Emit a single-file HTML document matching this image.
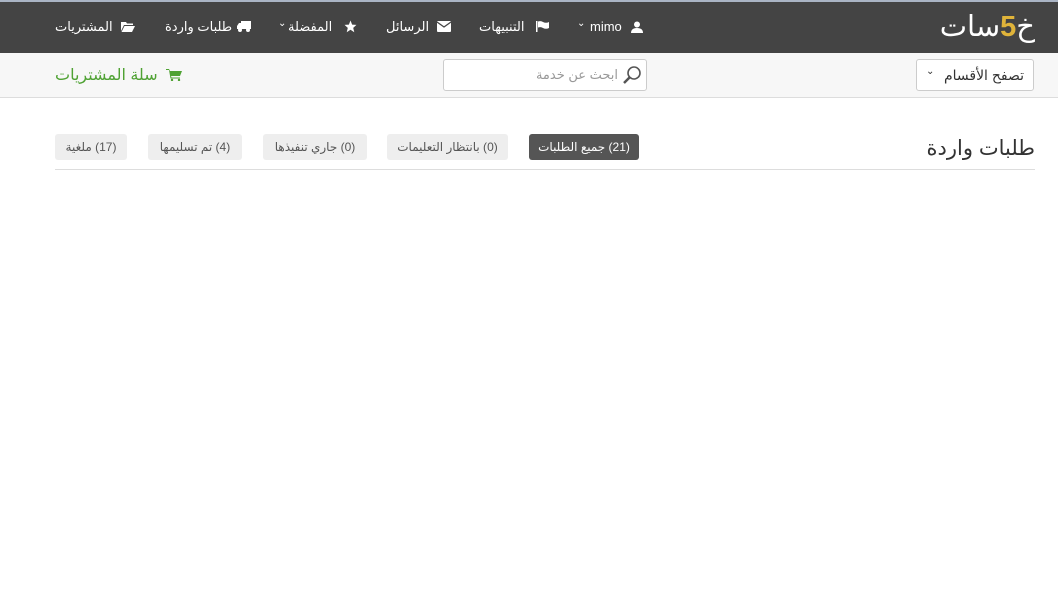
<!DOCTYPE html>
<html><head><meta charset="utf-8"><style>
*{margin:0;padding:0;box-sizing:border-box}
body{width:1058px;height:614px;background:#fff;position:relative;overflow:hidden;font-family:"Liberation Sans","DejaVu Sans",sans-serif;font-size:13px}
.a{position:absolute;white-space:nowrap}
#top{position:absolute;left:0;top:0;width:1058px;height:53px;background:#444;border-top:2px solid #aab4c4}
#sub{position:absolute;left:0;top:53px;width:1058px;height:45px;background:#f7f7f7;border-bottom:1px solid #ddd}
.n{color:#fff;font-size:13px;top:19px;direction:rtl}
.btn{position:absolute;top:134px;height:26px;border-radius:3px;background:#eee;color:#555;font-size:12px;line-height:26px;text-align:center;direction:rtl}
</style></head><body>
<div id="top"></div>
<div id="sub"></div>
<!-- logo -->
<div class="a" style="right:23px;top:7px;font-size:29px;color:#fff;direction:rtl;font-family:'DejaVu Sans',sans-serif;line-height:38px">خ<span style="color:#e0b43a;font-family:'Liberation Sans';font-weight:bold">5</span>سات</div>
<!-- nav -->
<svg class="a" style="left:631px;top:21px" width="12" height="12" viewBox="0 0 12 12"><circle cx="6" cy="3.5" r="3" fill="#fff"/><path d="M0 12 Q0 7 6 7 Q12 7 12 12Z" fill="#fff"/></svg>
<div class="a n" style="left:590px">mimo</div>
<div class="a n" style="left:577px;top:18px;font-size:10px">⌄</div>
<svg class="a" style="left:536px;top:21px" width="13" height="11" viewBox="0 0 13 11"><rect x="0" y="0" width="1.5" height="11" fill="#fff"/><path d="M2 0.5 Q5 -0.5 7 1 Q10 2.5 13 1 V7 Q10 8.5 7 7 Q5 5.5 2 6.5Z" fill="#fff"/></svg>
<div class="a n" style="left:479px">التنبيهات</div>
<svg class="a" style="left:437px;top:21px" width="14" height="11" viewBox="0 0 14 11"><rect x="0" y="0" width="14" height="11" rx="1" fill="#fff"/><path d="M0 1 L7 6 L14 1" stroke="#444" stroke-width="1.3" fill="none"/></svg>
<div class="a n" style="left:386px">الرسائل</div>
<svg class="a" style="left:344px;top:20px" width="13" height="13" viewBox="0 0 24 24"><path d="M12 1 L15 8.5 L23 9 L17 14.5 L19 22.5 L12 18 L5 22.5 L7 14.5 L1 9 L9 8.5Z" fill="#fff"/></svg>
<div class="a n" style="left:288px">المفضلة</div>
<div class="a n" style="left:278px;top:18px;font-size:10px">⌄</div>
<svg class="a" style="left:237px;top:21px" width="14" height="11" viewBox="0 0 14 11"><rect x="4" y="0" width="10" height="8" fill="#fff"/><path d="M0 5 L2 2 H4 V8 H0Z" fill="#fff"/><circle cx="3" cy="9" r="2" fill="#fff"/><circle cx="11" cy="9" r="2" fill="#fff"/></svg>
<div class="a n" style="left:165px">طلبات واردة</div>
<svg class="a" style="left:121px;top:21px" width="14" height="11" viewBox="0 0 14 11"><path d="M0 1 H5 L6 2.5 H12 V4 H3 L0 10Z" fill="#fff"/><path d="M3.5 5 H14 L11 11 H0.5Z" fill="#fff"/></svg>
<div class="a n" style="left:55px">المشتريات</div>
<!-- sub bar -->
<div class="a" style="left:916px;top:59px;width:118px;height:32px;border:1px solid #ccc;border-radius:3px;background:#fff"></div>
<div class="a" style="right:34px;top:67px;font-size:14px;color:#333;direction:rtl">تصفح الأقسام</div>
<div class="a" style="left:926px;top:66px;font-size:10px;color:#333">⌄</div>
<div class="a" style="left:443px;top:59px;width:204px;height:32px;border:1px solid #ccc;border-radius:3px;background:#fff"></div>
<svg class="a" style="left:622px;top:65px" width="20" height="20" viewBox="0 0 20 20"><circle cx="12" cy="8" r="6" stroke="#555" stroke-width="1.6" fill="none"/><path d="M7.5 12.5 L2 18" stroke="#555" stroke-width="2.5"/></svg>
<div class="a" style="right:440px;top:67px;font-size:13px;color:#999;direction:rtl">ابحث عن خدمة</div>
<svg class="a" style="left:166px;top:68px" width="16" height="13" viewBox="0 0 16 13"><path d="M0 1 H3 L4 3 H16 L14 8 H5 L5.5 9.5 H14 V10.5 H4.5 L3 2 H0Z" fill="#4fa233"/><circle cx="6" cy="12" r="1.2" fill="#4fa233"/><circle cx="13" cy="12" r="1.2" fill="#4fa233"/></svg>
<div class="a" style="left:55px;top:65px;font-size:16px;color:#4fa233;direction:rtl">سلة المشتريات</div>
<!-- content -->
<div class="a" style="right:23px;top:136px;font-size:21px;color:#333;direction:rtl">طلبات واردة</div>
<div class="a" style="left:55px;top:169px;width:980px;height:1px;background:#ddd"></div>
<div class="btn" style="left:529px;width:110px;background:#555;color:#fff">(21) جميع الطلبات</div>
<div class="btn" style="left:387px;width:121px">(0) بانتظار التعليمات</div>
<div class="btn" style="left:263px;width:104px">(0) جاري تنفيذها</div>
<div class="btn" style="left:148px;width:94px">(4) تم تسليمها</div>
<div class="btn" style="left:55px;width:72px">(17) ملغية</div>
</body></html>
